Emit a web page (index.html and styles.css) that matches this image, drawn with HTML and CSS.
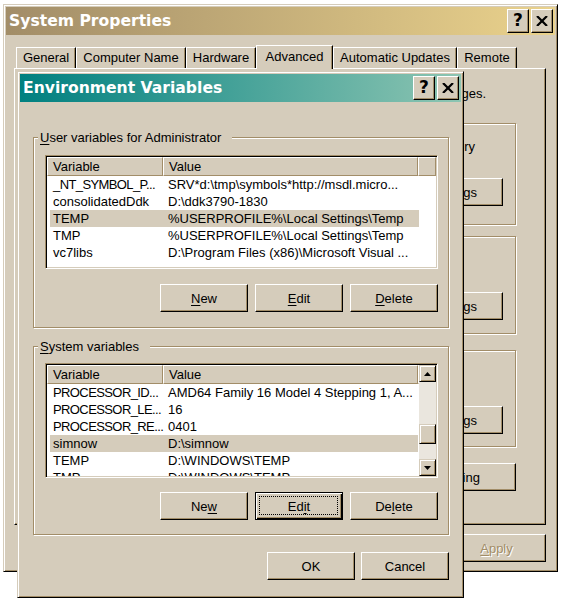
FILE: index.html
```html
<!DOCTYPE html>
<html>
<head>
<meta charset="utf-8">
<title>Environment Variables</title>
<link rel="stylesheet" href="styles.css">
</head>
<body>
<div class="desktop">

  <section class="win sysprops">
    <div class="titlebar inactive">
      <span class="title">System Properties</span>
      <div class="caption-btns">
        <span class="cap-btn cap-help">?</span>
        <span class="cap-btn cap-close"><svg width="12" height="10" viewBox="0 0 12 10"><path d="M1 0 L11 10 M11 0 L1 10" stroke="#000" stroke-width="2.2" fill="none"/></svg></span>
      </div>
    </div>
    <div class="tabs">
      <div class="tab t-general">General</div>
      <div class="tab t-comp">Computer Name</div>
      <div class="tab t-hw">Hardware</div>
      <div class="tab t-adv active">Advanced</div>
      <div class="tab t-au">Automatic Updates</div>
      <div class="tab t-remote">Remote</div>
    </div>
    <div class="tabpanel">
      <p class="sp-intro">You must be logged on as an Administrator to make most of these changes.</p>
      <div class="group sp-group g-perf">
        <span class="legend">Performance</span>
        <p class="sp-desc d-perf">Visual effects, processor scheduling, memory usage, and virtual memory</p>
        <div class="sp-btnrow"><span class="btn sp-settings">Settings</span></div>
      </div>
      <div class="group sp-group g-prof">
        <span class="legend">User Profiles</span>
        <p class="sp-desc">Desktop settings related to your logon</p>
        <div class="sp-btnrow"><span class="btn sp-settings">Settings</span></div>
      </div>
      <div class="group sp-group g-start">
        <span class="legend">Startup and Recovery</span>
        <p class="sp-desc">System startup, system failure, and debugging information</p>
        <div class="sp-btnrow"><span class="btn sp-settings">Settings</span></div>
      </div>
      <div class="sp-bottom-btns">
        <span class="btn sp-wide">Environment Variables</span>
        <span class="btn sp-wide sp-err">Error Reporting</span>
      </div>
    </div>
    <div class="sp-footer">
      <span class="btn sp-foot">OK</span>
      <span class="btn sp-foot">Cancel</span>
      <span class="btn sp-foot disabled"><u>A</u>pply</span>
    </div>
  </section>

  <section class="win envvars">
    <div class="titlebar active">
      <span class="title">Environment Variables</span>
      <div class="caption-btns">
        <span class="cap-btn cap-help">?</span>
        <span class="cap-btn cap-close"><svg width="12" height="10" viewBox="0 0 12 10"><path d="M1 0 L11 10 M11 0 L1 10" stroke="#000" stroke-width="2.2" fill="none"/></svg></span>
      </div>
    </div>
    <div class="env-body">
      <div class="group env-group g-user">
        <span class="legend"><u>U</u>ser variables for Administrator</span>
        <div class="list list-user">
          <div class="lv-main">
            <div class="lv-head">
              <div class="lv-hcell hc1">Variable</div>
              <div class="lv-hcell hc2">Value</div>
              <div class="lv-hcell hfill"></div>
            </div>
            <div class="lv-row"><span class="v1 caps">_NT_SYMBOL_P...</span><span class="v2">SRV*d:\tmp\symbols*http://msdl.micro...</span></div>
            <div class="lv-row"><span class="v1">consolidatedDdk</span><span class="v2">D:\ddk3790-1830</span></div>
            <div class="lv-row sel"><span class="v1">TEMP</span><span class="v2">%USERPROFILE%\Local Settings\Temp</span></div>
            <div class="lv-row"><span class="v1">TMP</span><span class="v2">%USERPROFILE%\Local Settings\Temp</span></div>
            <div class="lv-row"><span class="v1">vc7libs</span><span class="v2">D:\Program Files (x86)\Microsoft Visual ...</span></div>
          </div>
        </div>
        <div class="btnrow">
          <span class="btn"><u>N</u>ew</span>
          <span class="btn"><u>E</u>dit</span>
          <span class="btn"><u>D</u>elete</span>
        </div>
      </div>

      <div class="group env-group g-sys">
        <span class="legend"><u>S</u>ystem variables</span>
        <div class="list list-sys">
          <div class="lv-main">
            <div class="lv-head">
              <div class="lv-hcell hc1">Variable</div>
              <div class="lv-hcell hc2">Value</div>
              <div class="lv-hcell hfill"></div>
            </div>
            <div class="lv-row"><span class="v1 caps">PROCESSOR_ID...</span><span class="v2">AMD64 Family 16 Model 4 Stepping 1, A...</span></div>
            <div class="lv-row"><span class="v1 caps">PROCESSOR_LE...</span><span class="v2">16</span></div>
            <div class="lv-row"><span class="v1 caps">PROCESSOR_RE...</span><span class="v2">0401</span></div>
            <div class="lv-row sel"><span class="v1">simnow</span><span class="v2">D:\simnow</span></div>
            <div class="lv-row"><span class="v1">TEMP</span><span class="v2">D:\WINDOWS\TEMP</span></div>
            <div class="lv-row"><span class="v1">TMP</span><span class="v2">D:\WINDOWS\TEMP</span></div>
          </div>
          <div class="vscroll">
            <span class="sb-btn"><svg width="7" height="4" viewBox="0 0 7 4"><path d="M3.5 0 L7 4 L0 4 Z" fill="#000"/></svg></span>
            <div class="sb-track"><span class="sb-thumb"></span></div>
            <span class="sb-btn"><svg width="7" height="4" viewBox="0 0 7 4"><path d="M0 0 L7 0 L3.5 4 Z" fill="#000"/></svg></span>
          </div>
        </div>
        <div class="btnrow">
          <span class="btn">Ne<u>w</u></span>
          <span class="btn default">Ed<u>i</u>t</span>
          <span class="btn">De<u>l</u>ete</span>
        </div>
      </div>

      <div class="env-footer">
        <span class="btn">OK</span>
        <span class="btn">Cancel</span>
      </div>
    </div>
  </section>

</div>
</body>
</html>
```

FILE: styles.css
```css
* { box-sizing: border-box; }
html, body { margin: 0; padding: 0; }
body {
  width: 565px;
  height: 604px;
  background: #fff;
  font-family: "Liberation Sans", Arial, sans-serif;
  font-size: 13px;
  color: #000;
  overflow: hidden;
}
p { margin: 0; }
u { text-decoration: underline; text-underline-offset: 2px; }

.desktop { position: relative; width: 565px; height: 604px; }

/* window frame */
.win {
  position: absolute;
  background: #d5ccbb;
  border: 1px solid;
  border-color: #d5ccbb #000 #000 #d5ccbb;
  box-shadow: inset 1px 1px 0 #fff, inset -1px -1px 0 #a28d68;
  padding: 2px;
  display: flex;
  flex-direction: column;
}
.sysprops { left: 3px; top: 4px; width: 555px; height: 568px; }
.envvars { left: 17px; top: 71px; width: 447px; height: 527px; }

/* title bar */
.titlebar {
  height: 28px;
  flex: none;
  display: flex;
  align-items: center;
  padding: 0 2px 0 3px;
}
.titlebar.active { background: linear-gradient(to right, #008080, #8dc5b2); }
.titlebar.inactive { background: linear-gradient(to right, #a28d68, #ead28c); }
.title {
  font-family: "DejaVu Sans", Verdana, sans-serif;
  font-weight: bold;
  font-size: 15.6px;
  color: #fff;
  white-space: nowrap;
}
.caption-btns { margin-left: auto; display: flex; gap: 2px; }
.cap-btn {
  width: 22px;
  height: 24px;
  background: #d5ccbb;
  border: 1px solid;
  border-color: #fff #000 #000 #fff;
  box-shadow: inset -1px -1px 0 #a28d68;
  display: flex;
  align-items: center;
  justify-content: center;
}
.cap-help {
  font-family: "DejaVu Sans", Verdana, sans-serif;
  font-weight: bold;
  font-size: 17px;
  line-height: 1;
  padding-bottom: 1px;
}

/* buttons */
.btn {
  width: 88px;
  height: 28px;
  flex: none;
  display: flex;
  align-items: center;
  justify-content: center;
  background: #d5ccbb;
  border: 1px solid;
  border-color: #fff #000 #000 #fff;
  box-shadow: inset -1px -1px 0 #a28d68;
  white-space: nowrap;
  position: relative;
}
.btn.default {
  border-color: #000;
  box-shadow: inset 1px 1px 0 #fff, inset -1px -1px 0 #000, inset -2px -2px 0 #a28d68;
}
.btn.default::after {
  content: "";
  position: absolute;
  left: 3px; top: 3px; right: 4px; bottom: 4px;
  border: 1px dotted #000;
}
.btn.disabled { color: #a28d68; text-shadow: 1px 1px 0 #fff; }

/* group boxes */
.group {
  border: 1px solid #a28d68;
  box-shadow: inset 1px 1px 0 #fff, 1px 1px 0 #fff;
  display: flex;
  flex-direction: column;
}
.legend {
  display: block;
  width: max-content;
  height: 17px;
  line-height: 17px;
  margin-top: -9px;
  background: #d5ccbb;
  padding: 0 11px 0 2px;
  white-space: nowrap;
}

/* environment variables dialog */
.env-body {
  flex: 1;
  display: flex;
  flex-direction: column;
  padding: 35px 12px 0 13px;
}
.env-group { padding: 0 10px 15px 11px; }
.env-group .legend { margin-left: -7px; }
.g-sys { margin-top: 18px; padding-bottom: 14px; }
.list-user { margin-top: 9px; height: 114px; }
.list-sys { margin-top: 8px; height: 115px; }
.g-user .btnrow { margin-top: 15px; }
.g-sys .btnrow { margin-top: 14px; }
.btnrow { display: flex; justify-content: flex-end; gap: 7px; }
.env-footer { display: flex; justify-content: flex-end; gap: 6px; margin-top: 17px; }

/* list view */
.list {
  width: 393px;
  flex: none;
  background: #fff;
  border: 1px solid;
  border-color: #a28d68 #fff #fff #a28d68;
  box-shadow: inset 1px 1px 0 #000, inset -1px -1px 0 #d5ccbb;
  padding: 1px;
  display: flex;
  overflow: hidden;
}
.lv-main { flex: 1; min-width: 0; overflow: hidden; }
.lv-head { display: flex; height: 19px; }
.lv-hcell {
  flex: none;
  height: 19px;
  line-height: 17px;
  padding-left: 5px;
  background: #d5ccbb;
  border: 1px solid;
  border-color: #fff #a28d68 #a28d68 #fff;
  white-space: nowrap;
}
.hc1 { width: 116px; }
.hc2 { width: 255px; }
.hfill { flex: 1; padding: 0; }
.lv-row {
  display: flex;
  height: 17px;
  line-height: 17px;
  margin-left: 3px;
  width: 369px;
  white-space: nowrap;
}
.list-sys .lv-row { width: 368px; }
.lv-row.sel { background: #d5ccbb; }
.v1 { width: 115px; flex: none; padding-left: 3px; overflow: hidden; }
.v1.caps { letter-spacing: -0.6px; }
.v2 { flex: 1; padding-left: 3px; overflow: hidden; }

/* scroll bar */
.vscroll {
  width: 17px;
  flex: none;
  display: flex;
  flex-direction: column;
  background: #eae6de;
}
.sb-btn, .sb-thumb {
  width: 17px;
  flex: none;
  background: #d5ccbb;
  border: 1px solid;
  border-color: #d5ccbb #000 #000 #d5ccbb;
  box-shadow: inset 1px 1px 0 #fff, inset -1px -1px 0 #a28d68;
}
.sb-btn { height: 17px; display: flex; align-items: center; justify-content: center; }
.sb-track { flex: 1; padding-top: 42px; }
.sb-thumb { display: block; height: 20px; }

/* system properties dialog */
.tabs {
  display: flex;
  align-items: flex-end;
  height: 33px;
  padding-left: 10px;
  flex: none;
}
.tab {
  height: 21px;
  flex: none;
  display: flex;
  align-items: center;
  justify-content: center;
  background: #d5ccbb;
  border-top: 1px solid #fff;
  border-left: 1px solid #fff;
  border-right: 1px solid #000;
  box-shadow: inset -1px 0 0 #a28d68;
  white-space: nowrap;
  padding-bottom: 1px;
}
.tab.active {
  height: 24px;
  margin-bottom: -1px;
  position: relative;
  z-index: 1;
  padding-bottom: 3px;
}
.t-general { width: 60px; }
.t-comp { width: 110px; }
.t-hw { width: 70px; }
.t-adv { width: 77px; }
.t-au { width: 124px; }
.t-remote { width: 60px; }

.tabpanel {
  flex: none;
  margin-left: 8px;
  width: 532px;
  height: 457px;
  border: 1px solid;
  border-color: #fff #000 #000 #fff;
  box-shadow: inset -1px -1px 0 #a28d68;
  padding: 0 29px 0 11px;
  display: flex;
  flex-direction: column;
}
.sp-intro {
  margin-top: 17px;
  line-height: 16px;
  text-align: right;
  padding-right: 30px;
  white-space: nowrap;
}
.sp-group { padding: 0 0 0 10px; }
.sp-group .legend { margin-left: -4px; }
.g-perf { margin-top: 21px; height: 102px; }
.g-prof { margin-top: 11px; height: 98px; }
.g-start { margin-top: 16px; height: 97px; }
.sp-desc {
  margin-top: 7px;
  line-height: 16px;
  white-space: nowrap;
}
.sp-desc.d-perf { text-align: right; padding-right: 40px; }
.sp-btnrow { display: flex; justify-content: flex-end; margin-top: 23px; padding-right: 12px; }
.g-prof .sp-btnrow, .g-start .sp-btnrow { margin-top: 24px; }
.sp-settings { width: 99px; }
.sp-bottom-btns { display: flex; justify-content: flex-end; gap: 7px; margin-top: 16px; }
.sp-wide { width: 148px; }
.sp-wide.sp-err { width: 161px; }
.sp-footer { display: flex; justify-content: flex-end; gap: 7px; margin-top: 9px; padding-right: 9px; }
.sp-foot { width: 99px; }
```
